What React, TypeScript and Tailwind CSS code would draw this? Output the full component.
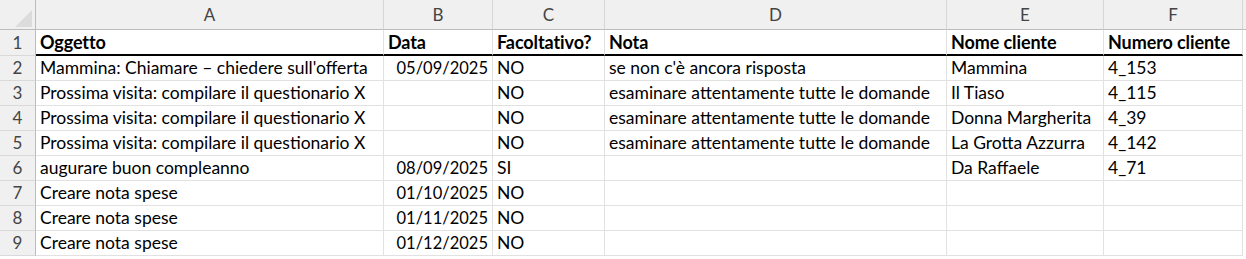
import React from 'react';

const COLS = [
  { key: 'A', w: 'w-[348px]' },
  { key: 'B', w: 'w-[109px]' },
  { key: 'C', w: 'w-[112px]' },
  { key: 'D', w: 'w-[342px]' },
  { key: 'E', w: 'w-[157px]' },
  { key: 'F', w: 'w-[139px]' },
];

const HEADERS = ['Oggetto', 'Data', 'Facoltativo?', 'Nota', 'Nome cliente', 'Numero cliente'];

const ROWS: string[][] = [
  ["Mammina: Chiamare – chiedere sull'offerta", '05/09/2025', 'NO', "se non c'è ancora risposta", 'Mammina', '4_153'],
  ['Prossima visita: compilare il questionario X', '', 'NO', 'esaminare attentamente tutte le domande', 'Il Tiaso', '4_115'],
  ['Prossima visita: compilare il questionario X', '', 'NO', 'esaminare attentamente tutte le domande', 'Donna Margherita', '4_39'],
  ['Prossima visita: compilare il questionario X', '', 'NO', 'esaminare attentamente tutte le domande', 'La Grotta Azzurra', '4_142'],
  ['augurare buon compleanno', '08/09/2025', 'SI', '', 'Da Raffaele', '4_71'],
  ['Creare nota spese', '01/10/2025', 'NO', '', '', ''],
  ['Creare nota spese', '01/11/2025', 'NO', '', '', ''],
  ['Creare nota spese', '01/12/2025', 'NO', '', '', ''],
];

function RowNum({ n, tall }: { n: number; tall?: boolean }) {
  return (
    <div
      className={`w-[36px] shrink-0 bg-[#f0f0f0] border-r border-r-[#bcbcbc] border-b border-b-[#d9d9d9] flex items-center justify-center text-[#444] text-[17px] ${
        tall ? 'h-[26px]' : 'h-[25px]'
      }`}
    >
      {n}
    </div>
  );
}

export default function App() {
  return (
    <div
      className="w-[1246px] h-[259px] bg-white overflow-hidden text-black"
      style={{ fontFamily: 'Lato, "Liberation Sans", sans-serif' }}
    >
      {/* column letters */}
      <div className="flex h-[30px]">
        <div className="w-[36px] shrink-0 bg-[#f0f0f0] border-r border-r-[#bcbcbc] border-b border-b-[#bcbcbc] relative">
          <svg className="absolute left-[15px] top-[10px]" width="17" height="17" viewBox="0 0 17 17">
            <polygon points="17,0 17,17 0,17" fill="#dcdcdc" />
          </svg>
        </div>
        {COLS.map((c) => (
          <div
            key={c.key}
            className={`${c.w} shrink-0 bg-[#f0f0f0] border-r border-r-[#d6d6d6] border-b border-b-[#bcbcbc] flex items-end justify-center pb-[2px] text-[#444] text-[17px]`}
          >
            {c.key}
          </div>
        ))}
        <div className="flex-1 bg-[#f0f0f0] border-b border-b-[#bcbcbc]" />
      </div>

      {/* header row */}
      <div className="flex">
        <RowNum n={1} tall />
        {HEADERS.map((h, i) => (
          <div
            key={h}
            className={`${COLS[i].w} shrink-0 h-[26px] border-r border-r-[#e1e1e1] border-b-2 border-b-black flex items-center pl-[4px] pt-[1px] font-bold text-[18px] tracking-[-0.1px] whitespace-nowrap overflow-hidden`}
          >
            {h}
          </div>
        ))}
      </div>

      {ROWS.map((r, ri) => (
        <div key={ri} className="flex">
          <RowNum n={ri + 2} />
          {r.map((v, ci) => (
            <div
              key={ci}
              className={`${COLS[ci].w} shrink-0 h-[25px] border-r border-r-[#e1e1e1] border-b border-b-[#e1e1e1] flex items-center whitespace-nowrap overflow-hidden ${
                ci === 1 ? 'justify-end pr-[4px] text-[16.5px]' : 'pl-[4px] text-[17.5px]'
              }`}
            >
              {v}
            </div>
          ))}
        </div>
      ))}
    </div>
  );
}
